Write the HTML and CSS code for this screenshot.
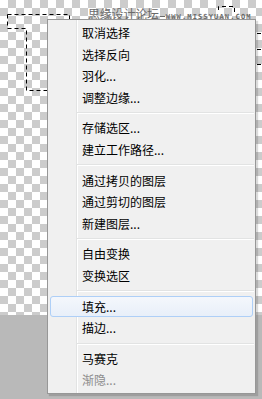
FILE: index.html
```html
<!DOCTYPE html>
<html>
<head>
<meta charset="utf-8">
<link rel="stylesheet" href="styles.css">
</head>
<body>
<div class="stage">
  <div class="canvas"></div>
  <div class="pasteboard"></div>
  <svg class="ants" width="262" height="399" viewBox="0 0 262 399">
    <path d="M7.5 14.5 H69.5 V20" />
    <path d="M7.5 14.5 V28.5 H26.5 V90.5 H48" />
    <path d="M218.5 10 V6.5 H234.5 V14" />
    <path d="M257 33.5 H262 M257 49.5 H262 M257 64.5 H262" />
  </svg>
  <div class="watermark"><span class="wm-cn">思缘设计论坛</span><span class="wm-dash"></span><span class="wm-en">WWW.MISSYUAN.COM</span></div>
  <div class="menu">
    <div class="item">取消选择</div>
    <div class="item">选择反向</div>
    <div class="item">羽化...</div>
    <div class="item">调整边缘...</div>
    <div class="sep"></div>
    <div class="item">存储选区...</div>
    <div class="item">建立工作路径...</div>
    <div class="sep"></div>
    <div class="item">通过拷贝的图层</div>
    <div class="item">通过剪切的图层</div>
    <div class="item">新建图层...</div>
    <div class="sep"></div>
    <div class="item">自由变换</div>
    <div class="item">变换选区</div>
    <div class="sep"></div>
    <div class="item hover">填充...</div>
    <div class="item">描边...</div>
    <div class="sep"></div>
    <div class="item">马赛克</div>
    <div class="item disabled">渐隐...</div>
  </div>
</div>
</body>
</html>
```

FILE: styles.css
```css
html, body {
  margin: 0;
  padding: 0;
}
body {
  width: 262px;
  height: 399px;
  overflow: hidden;
  font-family: "Noto Sans CJK SC", "Noto Sans", sans-serif;
}
.stage {
  position: relative;
  width: 262px;
  height: 399px;
  display: flex;
  flex-direction: column;
}
.canvas {
  height: 315px;
  background-color: #ffffff;
  background-image:
    linear-gradient(45deg, #cccccc 25%, transparent 25%, transparent 75%, #cccccc 75%),
    linear-gradient(45deg, #cccccc 25%, transparent 25%, transparent 75%, #cccccc 75%);
  background-size: 16px 16px;
  background-position: 0 0, 8px 8px;
}
.pasteboard {
  flex: 1;
  background: #b9b9b9;
}
.ants {
  position: absolute;
  left: 0;
  top: 0;
}
.ants path {
  fill: none;
  stroke: #000;
  stroke-width: 1;
  stroke-dasharray: 4 3;
}
.watermark {
  position: absolute;
  left: 88px;
  top: 5px;
  display: flex;
  align-items: center;
  height: 18px;
  color: #6a6a6a;
}
.wm-cn {
  font-size: 12px;
  line-height: 18px;
  letter-spacing: -0.2px;
}
.wm-dash {
  width: 5px;
  height: 1px;
  background: #6a6a6a;
  margin: 5px 1px 0 1px;
}
.wm-en {
  font-family: "DejaVu Sans Mono", monospace;
  font-size: 7px;
  letter-spacing: 1.15px;
  margin-top: 5px;
  font-weight: bold;
}
.menu {
  position: absolute;
  left: 47px;
  top: 19px;
  width: 209px;
  height: 375px;
  box-sizing: border-box;
  border: 1px solid #979797;
  padding: 2px 0;
  background:
    linear-gradient(to right, transparent 28px, #e2e3e3 28px, #e2e3e3 29px, #ffffff 29px, #ffffff 30px, transparent 30px),
    #f0f0f0;
  box-shadow: 2px 2px 1px rgba(0, 0, 0, 0.14);
  display: flex;
  flex-direction: column;
}
.item {
  height: 21.5px;
  line-height: 21.5px;
  padding-left: 34px;
  font-size: 12px;
  color: #000;
  white-space: nowrap;
}
.item.hover {
  margin: 0 2px;
  padding-left: 31px;
  border: 1px solid #aecff7;
  border-radius: 3px;
  height: 19.5px;
  line-height: 19.5px;
  background: linear-gradient(#f4f7fc, #e8eff9);
}
.item.disabled {
  color: #8d8d8d;
}
.sep {
  height: 9.5px;
  margin: 0 1px 0 29px;
  background: linear-gradient(transparent 4px, #e2e3e3 4px, #e2e3e3 5px, #ffffff 5px, #ffffff 6px, transparent 6px);
}
```
